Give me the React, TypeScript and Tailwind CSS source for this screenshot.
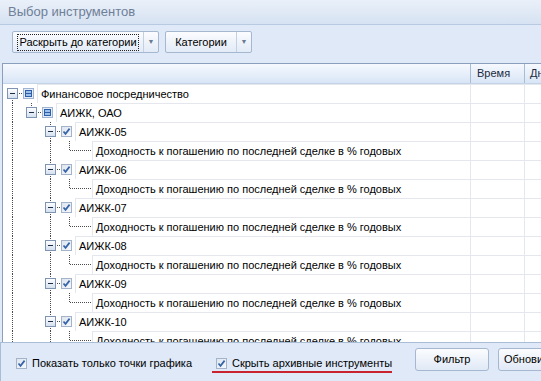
import React from "react";

type Line = "none" | "full" | "top" | "bottom";

interface TreeRow {
  level: number;
  text: string;
  kind: "group" | "check" | "leaf";
  guides: Line[];
  own: Line;
}

const leafText = "Доходность к погашению по последней сделке в % годовых";

const buildRows = (): TreeRow[] => {
  const rows: TreeRow[] = [
    { level: 0, text: "Финансовое посредничество", kind: "group", guides: [], own: "bottom" },
    { level: 1, text: "АИЖК, ОАО", kind: "group", guides: ["full"], own: "top" },
  ];
  ["05", "06", "07", "08", "09", "10"].forEach((n) => {
    rows.push({ level: 2, text: `АИЖК-${n}`, kind: "check", guides: ["full", "none"], own: "full" });
    rows.push({ level: 3, text: leafText, kind: "leaf", guides: ["full", "none", "full"], own: "top" });
  });
  return rows;
};

// dotted tree connector cell, 19px tall
const Guide = ({ line, width = 19, horiz = false, expander = false }: { line: Line; width?: number; horiz?: boolean; expander?: boolean }) => (
  <svg width={width} height={19} className="shrink-0 block" shapeRendering="crispEdges">
    {line !== "none" && (
      <line
        x1={9.5}
        x2={9.5}
        y1={line === "bottom" ? 10 : 0}
        y2={line === "top" ? 10 : 19}
        stroke="#4a4a4a"
        strokeDasharray="1 1"
      />
    )}
    {horiz && <line x1={10} x2={width} y1={9.5} y2={9.5} stroke="#4a4a4a" strokeDasharray="1 1" />}
    {expander && (
      <>
        <defs>
          <linearGradient id="exp" x1="0" y1="0" x2="0" y2="1">
            <stop offset="0" stopColor="#ffffff" />
            <stop offset="1" stopColor="#d3dfee" />
          </linearGradient>
        </defs>
        <rect x={4.5} y={4.5} width={10} height={10} rx={1} fill="url(#exp)" stroke="#7f93b3" />
        <line x1={7} x2={12} y1={9.5} y2={9.5} stroke="#1f2d44" />
      </>
    )}
  </svg>
);

const GroupIcon = () => (
  <svg width={11} height={11} className="block">
    <rect x={0.5} y={0.5} width={10} height={10} fill="#e3ecf8" stroke="#9fb4d2" />
    <rect x={2.5} y={2.5} width={6} height={6} fill="#9cc0ea" stroke="#2c5fa6" />
    <rect x={3} y={5} width={5} height={1} fill="#2c5fa6" />
  </svg>
);

const CheckIcon = () => (
  <svg width={11} height={11} className="block shrink-0">
    <defs>
      <linearGradient id="cb" x1="0" y1="0" x2="1" y2="1">
        <stop offset="0" stopColor="#dde4ee" />
        <stop offset="1" stopColor="#f7f9fc" />
      </linearGradient>
    </defs>
    <rect x={0.5} y={0.5} width={10} height={10} fill="url(#cb)" stroke="#a3b3c9" />
    <path d="M2.5 5.5 L4.5 7.8 L8.6 2.6" fill="none" stroke="#3564a8" strokeWidth={1.7} />
  </svg>
);

const Row = ({ row }: { row: TreeRow }) => (
  <div className="flex h-[19px]">
    <div className="w-[467px] flex shrink-0">
      {row.guides.map((g, i) => (
        <Guide key={i} line={g} />
      ))}
      {row.kind === "leaf" ? (
        <Guide line={row.own} width={32} horiz />
      ) : (
        <>
          <Guide line={row.own} horiz expander />
          <div className="w-[15px] shrink-0 flex items-center pl-[1px]">
            {row.kind === "group" ? <GroupIcon /> : <CheckIcon />}
          </div>
        </>
      )}
      <div className="flex-1 border-l border-t border-[#e4e8ee] pl-[3px] flex items-center whitespace-nowrap text-[11px] text-black">
        {row.text}
      </div>
    </div>
    <div className="w-[54px] shrink-0 border-l border-t border-[#e4e8ee]" />
    <div className="w-[80px] shrink-0 border-l border-t border-[#e4e8ee]" />
  </div>
);

const SplitButton = ({ label, mainW, focused }: { label: string; mainW: string; focused?: boolean }) => (
  <div className="flex h-[22px] rounded-[2px] border border-[#a6b8d0] bg-[linear-gradient(#fbfcfe,#e2ebf7)]">
    <div className={`${mainW} flex items-center justify-center px-[2px]`}>
      <span className={`px-[1px] h-[17px] flex items-center text-[11px] text-black ${focused ? "border border-dotted border-[#222]" : ""}`}>
        {label}
      </span>
    </div>
    <div className="w-[15px] border-l border-[#c2d0e2] flex items-center justify-center text-[7px] text-[#6a7a90]">▼</div>
  </div>
);

export default function App() {
  const rows = buildRows();
  return (
    <div className="w-[541px] h-[381px] overflow-hidden flex flex-col bg-[#dfe9f7] font-['Liberation_Sans',Arial,sans-serif]">
      <div className="h-[25px] shrink-0 flex items-center px-[8px] bg-[linear-gradient(#eaf0f9,#d6e2f2)] border-b border-[#b8cae2] text-[13px] text-[#6f7f97]">
        Выбор инструментов
      </div>

      <div className="h-[38px] shrink-0 flex items-start pt-[6px] pl-[12px] gap-[6px]">
        <SplitButton label="Раскрыть до категории" mainW="w-[130px]" focused />
        <SplitButton label="Категории" mainW="w-[70px]" />
      </div>

      <div className="flex-1 min-h-0 ml-[2px] border-l border-t border-[#8a9fbc] bg-white overflow-hidden">
        <div className="flex h-[20px] bg-[linear-gradient(#f6f9fe,#d8e5f6)] border-b border-[#c4d3e6] text-[11px] text-[#1b2a40]">
          <div className="w-[467px] shrink-0" />
          <div className="w-[54px] shrink-0 border-l border-[#a9bcd5] flex items-center pl-[6px]">Время</div>
          <div className="w-[80px] shrink-0 border-l border-[#a9bcd5] flex items-center pl-[5px]">Дней</div>
        </div>
        {rows.map((r, i) => (
          <Row key={i} row={r} />
        ))}
      </div>

      <div className="h-[39px] shrink-0 border-t border-[#8fa5c2] border-l border-[#a9bdd7] flex items-start text-[11px] text-black whitespace-nowrap">
        <div className="w-[185px] shrink-0 flex items-center h-[16px] mt-[12px] ml-[15px] gap-[5px]">
          <CheckIcon />
          <span>Показать только точки графика</span>
        </div>
        <div className="w-[181px] shrink-0 flex flex-col ml-[11px] mt-[12px]">
          <div className="flex items-center h-[16px] gap-[5px] pl-[4px]">
            <CheckIcon />
            <span>Скрыть архивные инструменты</span>
          </div>
          <div className="h-[2px] w-[180px] mt-[0px] bg-[#c8232e]" />
        </div>
        <div className="ml-[22px] mt-[5px] w-[74px] shrink-0 h-[23px] rounded-[3px] border border-[#a6b8d0] bg-[linear-gradient(#fbfcfe,#e0e9f6)] flex items-center justify-center">
          Фильтр
        </div>
        <div className="ml-[9px] mt-[5px] w-[80px] h-[23px] shrink-0 rounded-[3px] border border-[#a6b8d0] bg-[linear-gradient(#fbfcfe,#e0e9f6)] flex items-center pl-[5px]">
          Обновить
        </div>
      </div>
    </div>
  );
}
